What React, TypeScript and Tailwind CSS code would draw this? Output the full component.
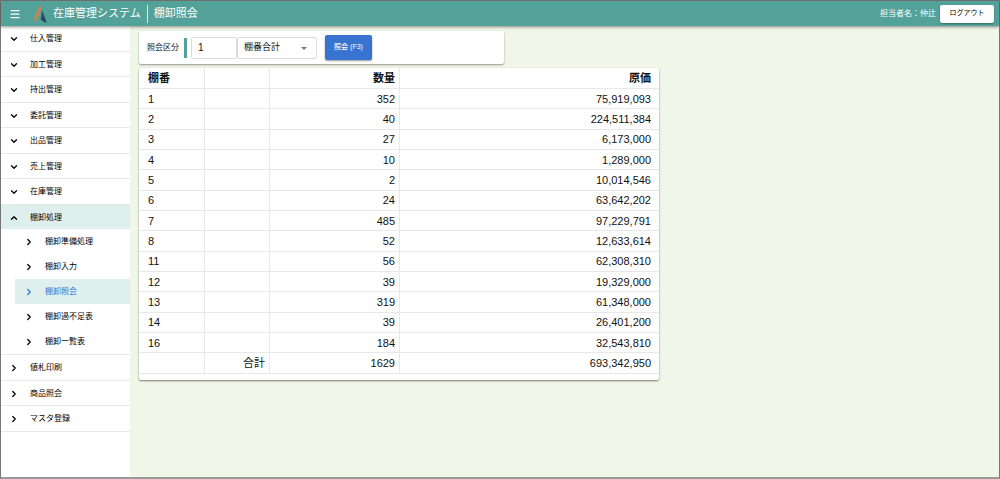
import { useState } from 'react'
import { ChevronDown, ChevronRight, ChevronUp, Menu } from 'lucide-react'

interface MenuItem {
  label: string
  type: 'open' | 'closed' | 'link'
  children?: string[]
}

const menuItems: MenuItem[] = [
  { label: '仕入管理', type: 'closed' },
  { label: '加工管理', type: 'closed' },
  { label: '持出管理', type: 'closed' },
  { label: '委託管理', type: 'closed' },
  { label: '出品管理', type: 'closed' },
  { label: '売上管理', type: 'closed' },
  { label: '在庫管理', type: 'closed' },
  {
    label: '棚卸処理',
    type: 'open',
    children: ['棚卸準備処理', '棚卸入力', '棚卸照会', '棚卸過不足表', '棚卸一覧表'],
  },
  { label: '値札印刷', type: 'link' },
  { label: '商品照会', type: 'link' },
  { label: 'マスタ登録', type: 'link' },
]

const rows = [
  { shelf: '1', qty: '352', cost: '75,919,093' },
  { shelf: '2', qty: '40', cost: '224,511,384' },
  { shelf: '3', qty: '27', cost: '6,173,000' },
  { shelf: '4', qty: '10', cost: '1,289,000' },
  { shelf: '5', qty: '2', cost: '10,014,546' },
  { shelf: '6', qty: '24', cost: '63,642,202' },
  { shelf: '7', qty: '485', cost: '97,229,791' },
  { shelf: '8', qty: '52', cost: '12,633,614' },
  { shelf: '11', qty: '56', cost: '62,308,310' },
  { shelf: '12', qty: '39', cost: '19,329,000' },
  { shelf: '13', qty: '319', cost: '61,348,000' },
  { shelf: '14', qty: '39', cost: '26,401,200' },
  { shelf: '16', qty: '184', cost: '32,543,810' },
]

const menuIcon = { open: ChevronUp, closed: ChevronDown, link: ChevronRight }

function Logo() {
  return (
    <svg viewBox="0 0 14 20" className="h-5 w-3.5" aria-hidden="true">
      <path d="M6.8 1.6 L8.8 3.2 C7.8 8.4 5.6 13.4 2.2 17.4 L0.4 17.2 C1.4 11.8 3.6 5.8 6.8 1.6Z" fill="#b58a5c" />
      <path d="M8.6 6 C10.2 9 12.4 13.8 13.6 18.8 C11.4 18.6 9 17.2 7.6 15 C8.6 12 8.8 9 8.6 6Z" fill="#2c4a66" />
    </svg>
  )
}

function Header() {
  return (
    <header className="relative z-10 flex h-[25px] shrink-0 items-center bg-[#53a29a] pr-[5px] pl-2 text-white shadow-[0_1px_3px_rgba(0,0,0,0.45)]">
      <button type="button" aria-label="メニュー" className="mr-3">
        <Menu className="h-3 w-3" strokeWidth={2.5} />
      </button>
      <Logo />
      <span className="ml-1.5 text-[11px]">在庫管理システム</span>
      <span className="mx-1.5 h-[18px] w-px bg-white/80" />
      <h1 className="text-[11px]">棚卸照会</h1>
      <span className="mr-1 ml-auto text-[8px]">担当者名：仲辻</span>
      <button
        type="button"
        className="h-[18px] w-[54px] rounded-xs bg-white text-[7px] text-black shadow-[0_1px_2px_rgba(0,0,0,0.35)]"
      >
        ログアウト
      </button>
    </header>
  )
}

function Sidebar() {
  return (
    <nav className="w-[129px] shrink-0 bg-white text-[8px] text-black">
      <ul>
        {menuItems.map((item) => {
          const Icon = menuIcon[item.type]
          return (
            <li key={item.label} className="group border-b border-[#e8e8e8]">
              <a
                href="#"
                className={`flex h-6 items-center pt-px pl-2 group-odd:h-[25px] ${item.children ? 'bg-[#dfefed]' : ''}`}
              >
                <Icon className="mr-[11px] h-2.5 w-2.5" strokeWidth={3} />
                {item.label}
              </a>
              {item.children && (
                <ul>
                  {item.children.map((child) => (
                    <li key={child} className="pl-3.5">
                      <a
                        href="#"
                        className={`flex h-[25px] items-center pt-px pl-[9px] ${child === '棚卸照会' ? 'bg-[#dfefed] text-[#3873cf]' : ''}`}
                      >
                        <ChevronRight className="mr-[11px] h-2.5 w-2.5" strokeWidth={3} />
                        {child}
                      </a>
                    </li>
                  ))}
                </ul>
              )}
            </li>
          )
        })}
      </ul>
    </nav>
  )
}

function SearchBar() {
  const [code, setCode] = useState('1')

  return (
    <form
      className="flex h-[33px] w-[365px] items-center rounded-xs bg-white pl-2 shadow-[0_1px_2px_rgba(0,0,0,0.4)]"
      onSubmit={(e) => e.preventDefault()}
    >
      <label htmlFor="code" className="mr-[5px] text-[8px]">
        照会区分
      </label>
      <span className="mr-1 h-5 w-[3px] bg-[#53a29a]" />
      <input
        id="code"
        value={code}
        onChange={(e) => setCode(e.target.value)}
        className="h-[22px] w-[46px] rounded-xs border border-[#dcdcdc] px-1.5 text-[10px]"
      />
      <div className="relative flex">
        <select
          aria-label="照会区分名"
          className="h-[22px] w-20 appearance-none rounded-xs border border-[#dcdcdc] bg-white pl-1.5 text-[9px]"
        >
          <option>棚番合計</option>
        </select>
        <svg viewBox="0 0 6 3" className="pointer-events-none absolute top-2.5 right-2.5 h-[3px] w-1.5" aria-hidden="true">
          <path d="M0 0h6L3 3z" fill="#757575" />
        </svg>
      </div>
      <button
        type="submit"
        className="ml-2 h-[25px] w-[47px] rounded-xs bg-[#3873cf] text-[7px] font-medium text-white shadow-[0_1px_2px_rgba(0,0,0,0.4)]"
      >
        照会 (F3)
      </button>
    </form>
  )
}

function ResultTable() {
  return (
    <div className="w-[520px] rounded-xs bg-white pb-1.5 shadow-[0_1px_2px_rgba(0,0,0,0.5)]">
      <table className="h-[306px] w-full table-fixed border-separate border-spacing-0 text-[11px] leading-4 [&_td]:border-r [&_td]:border-b [&_td]:border-[#e8e8e8] [&_td:last-child]:border-r-0 [&_th]:border-r [&_th]:border-b [&_th]:border-[#e8e8e8] [&_th:last-child]:border-r-0">
        <colgroup>
          <col className="w-[66px]" />
          <col className="w-[65px]" />
          <col className="w-[130px]" />
          <col />
        </colgroup>
        <thead>
          <tr className="h-[21px]">
            <th className="pl-[9px] text-left">棚番</th>
            <th />
            <th className="pr-1 text-right">数量</th>
            <th className="pr-2 text-right">原価</th>
          </tr>
        </thead>
        <tbody>
          {rows.map((row) => (
            <tr key={row.shelf}>
              <td className="pl-[9px]">{row.shelf}</td>
              <td />
              <td className="pr-1 text-right">{row.qty}</td>
              <td className="pr-2 text-right">{row.cost}</td>
            </tr>
          ))}
          <tr>
            <td />
            <td className="pr-1 text-right">合計</td>
            <td className="pr-1 text-right">1629</td>
            <td className="pr-2 text-right">693,342,950</td>
          </tr>
        </tbody>
      </table>
    </div>
  )
}

export default function App() {
  return (
    <div className="flex min-h-screen flex-col border border-b-2 border-[#777] border-b-[#999] bg-[#f1f7e8] font-['Liberation_Sans','Noto_Sans_CJK_JP',sans-serif] text-[#111]">
      <Header />
      <div className="flex flex-1">
        <Sidebar />
        <main className="flex flex-col gap-1 py-[5px] pl-[9px]">
          <SearchBar />
          <ResultTable />
        </main>
      </div>
    </div>
  )
}
